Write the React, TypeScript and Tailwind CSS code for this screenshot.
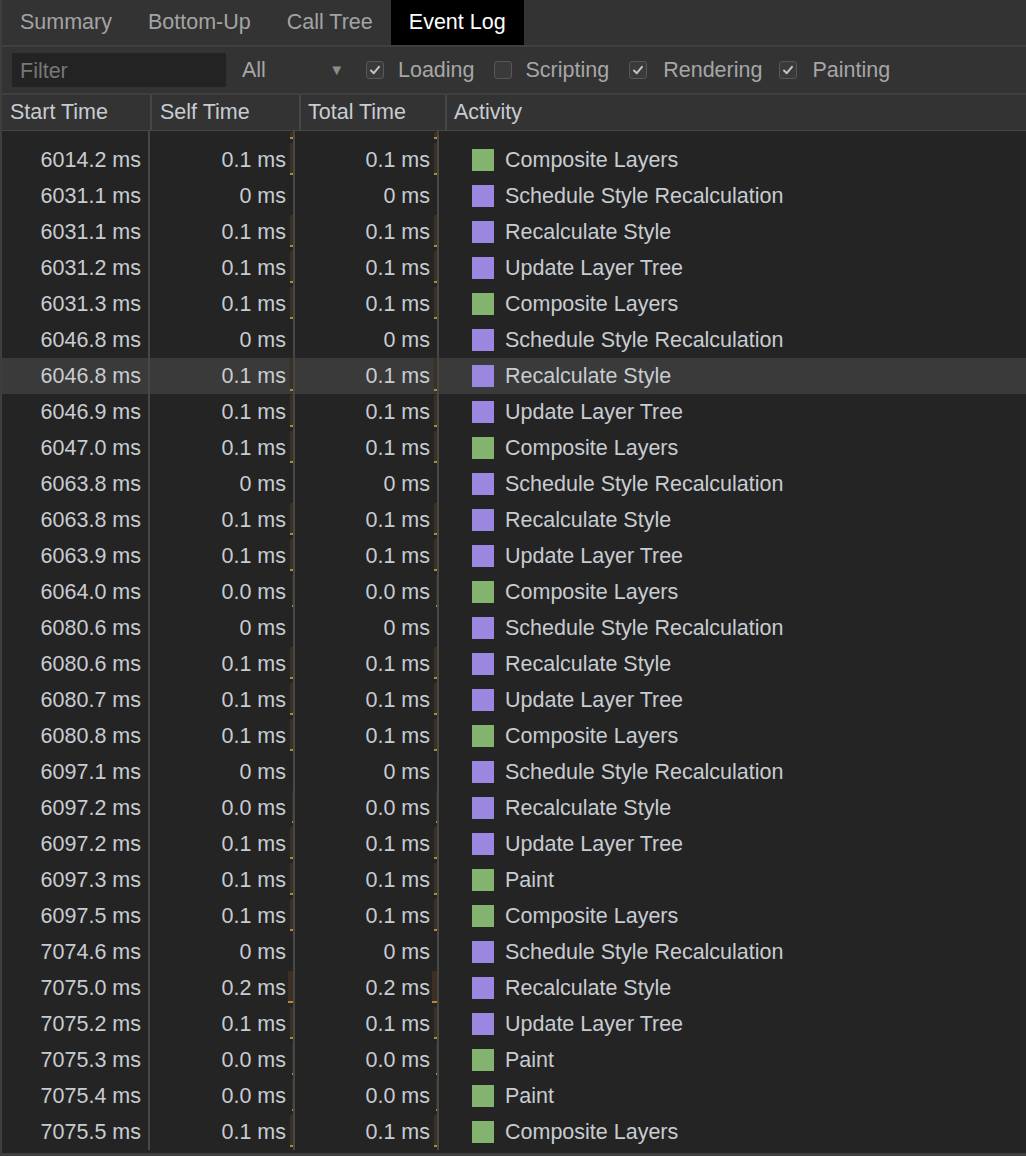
import React from "react";

type Row = { start: string; self: string; total: string; name: string; kind: "g" | "p" };

const rows: Row[] = [
  { start: "6014.2", self: "0.1", total: "0.1", name: "Composite Layers", kind: "g" },
  { start: "6031.1", self: "0", total: "0", name: "Schedule Style Recalculation", kind: "p" },
  { start: "6031.1", self: "0.1", total: "0.1", name: "Recalculate Style", kind: "p" },
  { start: "6031.2", self: "0.1", total: "0.1", name: "Update Layer Tree", kind: "p" },
  { start: "6031.3", self: "0.1", total: "0.1", name: "Composite Layers", kind: "g" },
  { start: "6046.8", self: "0", total: "0", name: "Schedule Style Recalculation", kind: "p" },
  { start: "6046.8", self: "0.1", total: "0.1", name: "Recalculate Style", kind: "p" },
  { start: "6046.9", self: "0.1", total: "0.1", name: "Update Layer Tree", kind: "p" },
  { start: "6047.0", self: "0.1", total: "0.1", name: "Composite Layers", kind: "g" },
  { start: "6063.8", self: "0", total: "0", name: "Schedule Style Recalculation", kind: "p" },
  { start: "6063.8", self: "0.1", total: "0.1", name: "Recalculate Style", kind: "p" },
  { start: "6063.9", self: "0.1", total: "0.1", name: "Update Layer Tree", kind: "p" },
  { start: "6064.0", self: "0.0", total: "0.0", name: "Composite Layers", kind: "g" },
  { start: "6080.6", self: "0", total: "0", name: "Schedule Style Recalculation", kind: "p" },
  { start: "6080.6", self: "0.1", total: "0.1", name: "Recalculate Style", kind: "p" },
  { start: "6080.7", self: "0.1", total: "0.1", name: "Update Layer Tree", kind: "p" },
  { start: "6080.8", self: "0.1", total: "0.1", name: "Composite Layers", kind: "g" },
  { start: "6097.1", self: "0", total: "0", name: "Schedule Style Recalculation", kind: "p" },
  { start: "6097.2", self: "0.0", total: "0.0", name: "Recalculate Style", kind: "p" },
  { start: "6097.2", self: "0.1", total: "0.1", name: "Update Layer Tree", kind: "p" },
  { start: "6097.3", self: "0.1", total: "0.1", name: "Paint", kind: "g" },
  { start: "6097.5", self: "0.1", total: "0.1", name: "Composite Layers", kind: "g" },
  { start: "7074.6", self: "0", total: "0", name: "Schedule Style Recalculation", kind: "p" },
  { start: "7075.0", self: "0.2", total: "0.2", name: "Recalculate Style", kind: "p" },
  { start: "7075.2", self: "0.1", total: "0.1", name: "Update Layer Tree", kind: "p" },
  { start: "7075.3", self: "0.0", total: "0.0", name: "Paint", kind: "g" },
  { start: "7075.4", self: "0.0", total: "0.0", name: "Paint", kind: "g" },
  { start: "7075.5", self: "0.1", total: "0.1", name: "Composite Layers", kind: "g" },
];

const barWidth = (v: string) => (v === "0" ? 0 : v === "0.0" ? 1 : Math.round(parseFloat(v) * 25));

function Check({ on }: { on: boolean }) {
  return (
    <span className="w-[18px] h-[18px] shrink-0 rounded-[3px] border border-[#575757] bg-[#3a3a3a] flex items-center justify-center">
      {on && (
        <svg width="12" height="12" viewBox="0 0 12 12">
          <path d="M2 6.5 L4.8 9.2 L10 2.8" stroke="#c4c4c4" strokeWidth="2" fill="none" strokeLinecap="round" strokeLinejoin="round" />
        </svg>
      )}
    </span>
  );
}

function Bar({ v }: { v: string }) {
  const bw = barWidth(v);
  if (!bw) return null;
  return (
    <span
      className="absolute right-0 top-[1px] bottom-[3px] bg-[#3a3122] border-b-2 border-[#b48a2c]"
      style={{ width: bw }}
    />
  );
}

function TimeCell({ w, v }: { w: string; v: string }) {
  return (
    <div className={`${w} relative h-full flex items-center justify-end pr-[7px]`}>
      {v} ms
      <Bar v={v} />
    </div>
  );
}

function DataRow({ r, selected }: { r: Row; selected?: boolean }) {
  return (
    <div className={`flex h-[36px] items-center ${selected ? "bg-[#3a3a3a]" : ""}`}>
      <div className="w-[146px] h-full flex items-center justify-end pr-[7px]">{r.start} ms</div>
      <div className="w-[2px] h-full bg-[#474747]" />
      <TimeCell w="w-[143px]" v={r.self} />
      <div className="w-[2px] h-full bg-[#474747]" />
      <TimeCell w="w-[142px]" v={r.total} />
      <div className="w-[2px] h-full bg-[#474747]" />
      <div className="flex-1 flex items-center pl-[33px]">
        <span className={`w-[22px] h-[22px] mr-[11px] ${r.kind === "g" ? "bg-[#84b26f]" : "bg-[#9b86e0]"}`} />
        {r.name}
      </div>
    </div>
  );
}

export default function App() {
  return (
    <div className="w-[1026px] h-[1156px] overflow-hidden bg-[#242424] border-l-2 border-[#3e3e3e] font-['Liberation_Sans',Arial,sans-serif] text-[21.5px] text-[#c8ccd1] flex flex-col">
      <div className="h-[45px] bg-[#333333] flex">
        {["Summary", "Bottom-Up", "Call Tree"].map((t) => (
          <div key={t} className="px-[18px] flex items-center text-[#a3a3a3]">{t}</div>
        ))}
        <div className="px-[18px] flex items-center bg-black text-white">Event Log</div>
      </div>
      <div className="h-[2px] bg-[#3f3f3f]" />
      <div className="h-[46px] bg-[#333333] flex items-center pl-[10px] text-[#a6a6a6]">
        <div className="w-[214px] h-[34px] bg-[#232323] flex items-center pl-[8px] pt-[2px] text-[#777777]">Filter</div>
        <div className="ml-[16px] w-[124px] flex items-center justify-between pr-[22px]">
          <span>All</span>
          <span className="text-[15px] text-[#8c8c8c]">▼</span>
        </div>
        <Check on />
        <span className="ml-[14px]">Loading</span>
        <span className="ml-[19px]"><Check on={false} /></span>
        <span className="ml-[14px]">Scripting</span>
        <span className="ml-[20px]"><Check on /></span>
        <span className="ml-[16px]">Rendering</span>
        <span className="ml-[17px]"><Check on /></span>
        <span className="ml-[15px]">Painting</span>
      </div>
      <div className="h-[2px] bg-[#3f3f3f]" />
      <div className="h-[35px] bg-[#333333] flex">
        <div className="w-[148px] flex items-center pl-[8px]">Start Time</div>
        <div className="w-[2px] bg-[#474747]" />
        <div className="w-[147px] flex items-center pl-[8px]">Self Time</div>
        <div className="w-[2px] bg-[#474747]" />
        <div className="w-[144px] flex items-center pl-[7px]">Total Time</div>
        <div className="w-[2px] bg-[#474747]" />
        <div className="flex-1 flex items-center pl-[7px]">Activity</div>
      </div>
      <div className="h-[1px] bg-[#474747]" />
      <div className="flex-1 overflow-hidden">
        <div className="flex h-[11px]">
          <div className="w-[146px]" />
          <div className="w-[2px] bg-[#474747]" />
          <div className="w-[143px] relative"><Bar v="0.1" /></div>
          <div className="w-[2px] bg-[#474747]" />
          <div className="w-[142px] relative"><Bar v="0.1" /></div>
          <div className="w-[2px] bg-[#474747]" />
        </div>
        {rows.map((r, i) => (
          <DataRow key={i} r={r} selected={i === 6} />
        ))}
      </div>
      <div className="h-[3px] bg-[#3e3e3e]" />
    </div>
  );
}
